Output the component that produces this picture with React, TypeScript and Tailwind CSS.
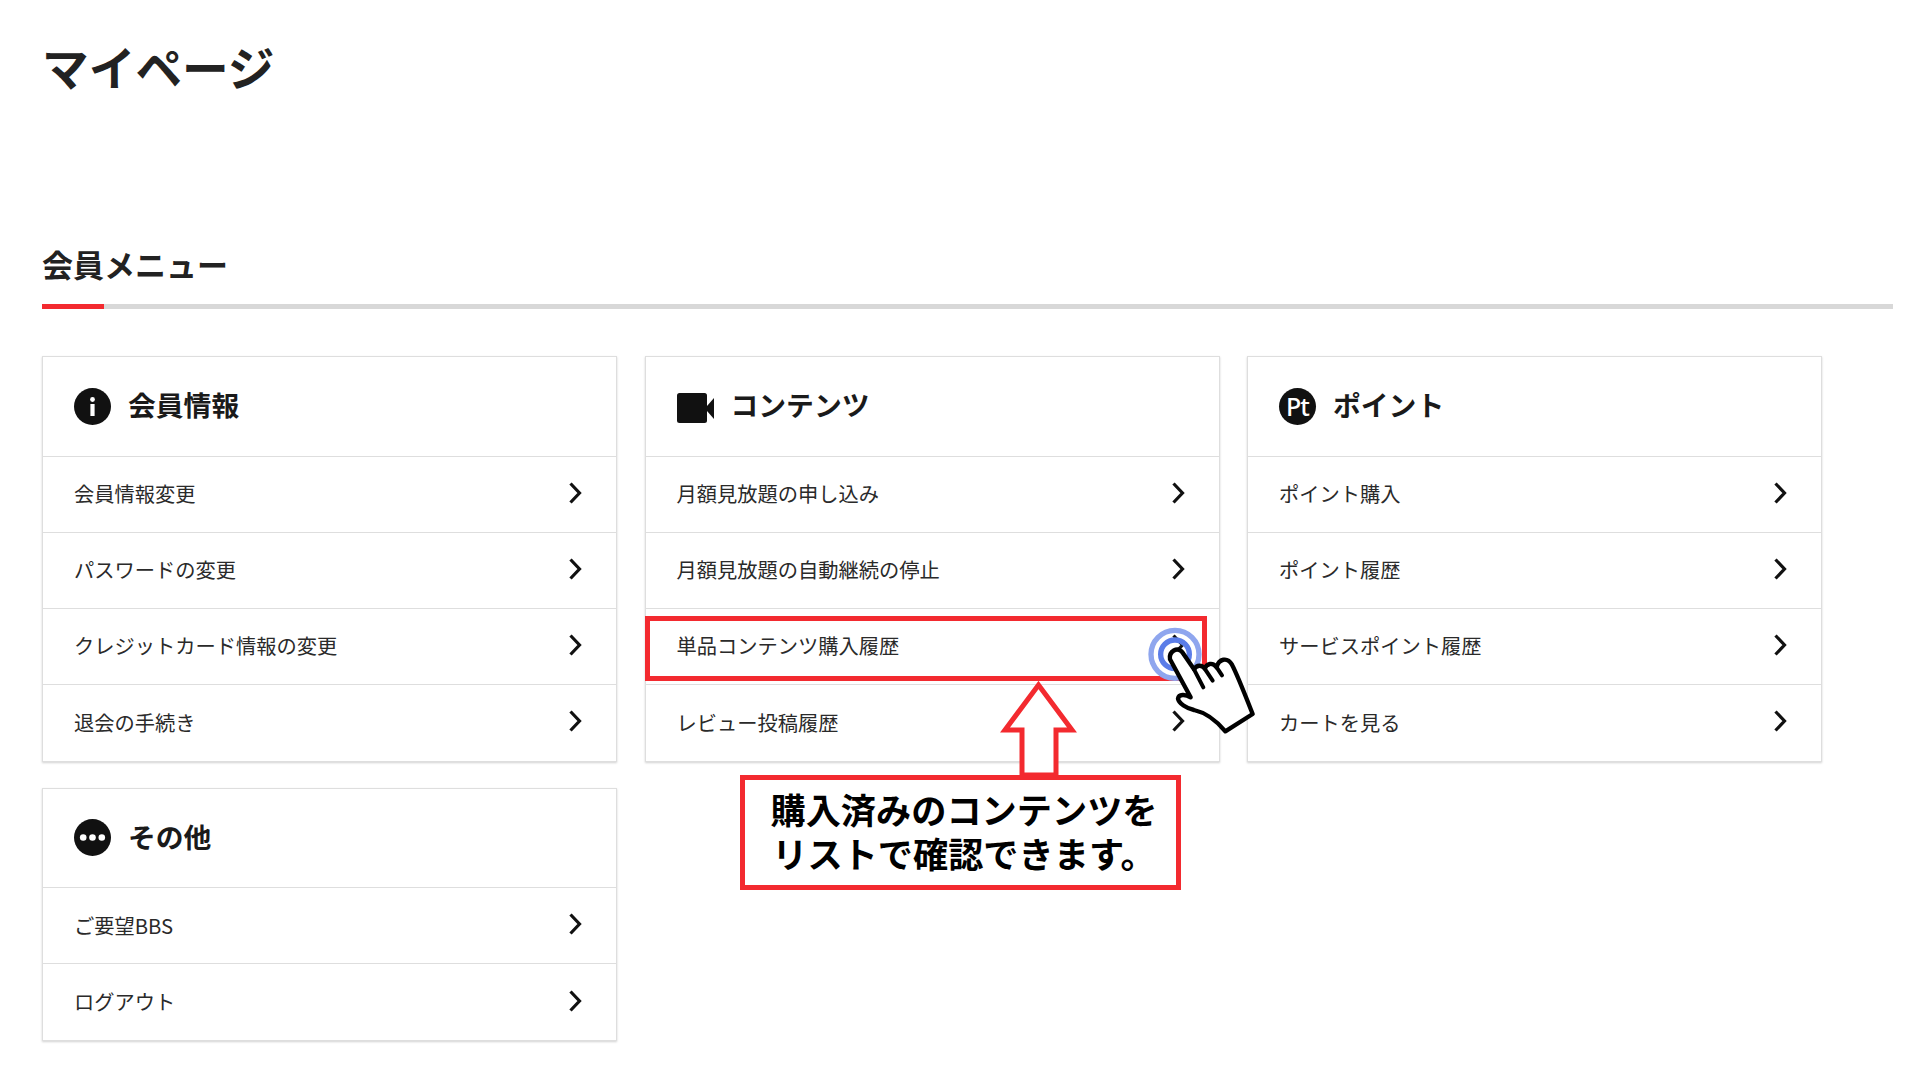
import { ReactNode } from "react";

const FONT = "font-['Noto_Sans_CJK_JP','Noto_Sans',sans-serif]";

function Chevron() {
  return (
    <svg width="14" height="22" viewBox="0 0 14 22" fill="none" className="-mt-[3px] shrink-0">
      <path d="M2.5 1.5 L11.5 11 L2.5 20.5" stroke="#111" strokeWidth="3.2" />
    </svg>
  );
}

function InfoIcon() {
  return (
    <svg width="37" height="37" viewBox="0 0 37 37">
      <circle cx="18.5" cy="18.5" r="18.5" fill="#111" />
      <circle cx="18.5" cy="11.5" r="2.4" fill="#fff" />
      <rect x="16.4" y="16" width="4.2" height="12" fill="#fff" />
    </svg>
  );
}

function VideoIcon() {
  return (
    <svg width="37" height="30" viewBox="0 0 37 30" className="mt-[4px]">
      <rect x="0" y="0" width="30" height="30" rx="2.5" fill="#111" />
      <path d="M30 13 L37 5 V26 L30 18 Z" fill="#111" />
    </svg>
  );
}

function PtIcon() {
  return (
    <span className="flex h-[37px] w-[37px] items-center justify-center rounded-full bg-[#111] text-[25px] leading-none font-medium tracking-[-1px] text-white font-['Noto_Sans',sans-serif]">
      Pt
    </span>
  );
}

function MoreIcon() {
  return (
    <svg width="37" height="37" viewBox="0 0 37 37">
      <circle cx="18.5" cy="18.5" r="18.5" fill="#111" />
      <circle cx="9.2" cy="18.5" r="3.3" fill="#fff" />
      <circle cx="18.5" cy="18.5" r="3.3" fill="#fff" />
      <circle cx="27.8" cy="18.5" r="3.3" fill="#fff" />
    </svg>
  );
}

function MenuCard({ icon, title, items }: { icon: ReactNode; title: string; items: string[] }) {
  return (
    <section className="w-[575px] border border-[#dedede] bg-white shadow-[0_1px_2px_rgba(0,0,0,0.18)]">
      <h3 className="flex h-[99.5px] items-center gap-[17px] border-b border-[#dedede] pl-[31px] text-[27.8px] leading-none font-bold text-[#1a1a1a]">
        {icon}
        <span className="-mt-[2px]">{title}</span>
      </h3>
      <ul>
        {items.map((item) => (
          <li
            key={item}
            className="flex h-[76.2px] items-center justify-between border-b border-[#dedede] pr-[34px] pl-[31px] text-[20.25px] leading-none text-[#2a2a2a] last:h-[75.5px] last:border-b-0"
          >
            <span>{item}</span>
            <Chevron />
          </li>
        ))}
      </ul>
    </section>
  );
}

// Tutorial overlay: highlight box, tap marker, arrow and caption
function Annotations() {
  return (
    <>
      <div className="absolute top-[616px] left-[645px] h-[65px] w-[562px] border-[5px] border-[#f32a2f]" />

      <svg className="absolute top-[610px] left-[1120px]" width="160" height="140" viewBox="0 0 480 420" fill="none">
        <circle cx="165" cy="133" r="72" stroke="#8fa6ee" strokeWidth="16" />
        <circle cx="165" cy="133" r="43" stroke="#5b7de8" strokeWidth="16" />
        <path
          d="M150 148 C146 124 172 108 188 128 L222 178 C230 164 246 164 254 176 C260 160 278 156 290 172 C296 146 322 140 336 164 C352 194 376 256 398 312 L316 364 C286 328 258 308 222 300 C200 296 176 280 174 266 C176 252 196 252 212 262 Z"
          fill="#fff"
          stroke="#000"
          strokeWidth="13"
          strokeLinejoin="round"
        />
        <path d="M222 178 L250 232 M254 176 L278 212 M290 172 L306 196" stroke="#000" strokeWidth="12" strokeLinecap="round" />
      </svg>

      <svg className="absolute top-[681px] left-[1000px]" width="78" height="96" viewBox="0 0 78 96" fill="none">
        <path d="M38.5 4 L72 49 H56 V94 H22 V49 H5 Z" fill="#fff" stroke="#f32a2f" strokeWidth="5" />
      </svg>

      <div className="absolute top-[775px] left-[740px] flex h-[115px] w-[441px] flex-col items-center justify-center border-[5px] border-[#f32a2f] bg-white pb-[3px] pl-[7px] text-[35.2px] leading-[44px] font-bold text-black">
        <span>購入済みのコンテンツを</span>
        <span>リストで確認できます。</span>
      </div>
    </>
  );
}

export default function App() {
  return (
    <div className={`relative h-[1080px] w-[1920px] overflow-hidden bg-white ${FONT}`}>
      <main className="pt-[43px] pr-[27px] pl-[42px]">
        <h1 className="text-[46.7px] leading-[46px] font-bold text-[#222]">マイページ</h1>

        <h2 className="mt-[160px] text-[31px] leading-[30px] font-bold text-[#222]">会員メニュー</h2>
        <div className="mt-[25px] h-[5px] bg-[#d8d8d8]">
          <div className="h-full w-[62px] bg-[#f32a2f]" />
        </div>

        <div className="mt-[47px] flex gap-[27.5px]">
          <div className="flex flex-col gap-[26px]">
            <MenuCard
              icon={<InfoIcon />}
              title="会員情報"
              items={["会員情報変更", "パスワードの変更", "クレジットカード情報の変更", "退会の手続き"]}
            />
            <MenuCard icon={<MoreIcon />} title="その他" items={["ご要望BBS", "ログアウト"]} />
          </div>
          <div>
            <MenuCard
              icon={<VideoIcon />}
              title="コンテンツ"
              items={["月額見放題の申し込み", "月額見放題の自動継続の停止", "単品コンテンツ購入履歴", "レビュー投稿履歴"]}
            />
          </div>
          <div>
            <MenuCard
              icon={<PtIcon />}
              title="ポイント"
              items={["ポイント購入", "ポイント履歴", "サービスポイント履歴", "カートを見る"]}
            />
          </div>
        </div>
      </main>
      <Annotations />
    </div>
  );
}
